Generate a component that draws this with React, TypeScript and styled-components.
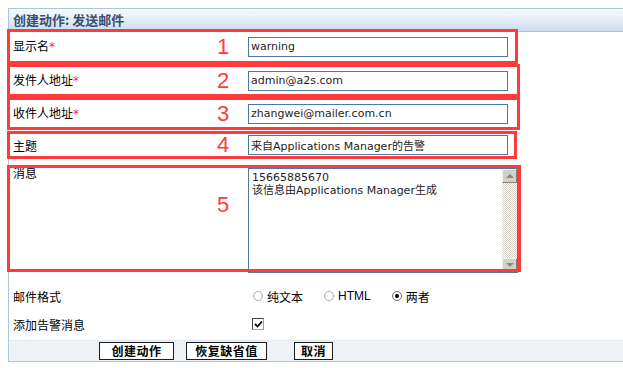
import React from 'react'
import styled, { createGlobalStyle } from 'styled-components'

const GlobalStyle = createGlobalStyle`
	html, body {
		margin: 0;
		padding: 0;
		background: #fff;
	}
	body {
		padding: 8px 0 0 8px;
		overflow: hidden;
		font-family: "Noto Sans CJK SC", sans-serif;
		font-size: 12px;
		color: #000;
	}
`

const LATIN = '"DejaVu Sans", "Noto Sans CJK SC", sans-serif'

interface Field {
	num: string
	label: string
	required?: boolean
	value: string
	h: number
	w: number
	mt: number
}

const fields: Field[] = [
	{ num: '1', label: '显示名', required: true, value: 'warning', h: 35, w: 511, mt: -3 },
	{ num: '2', label: '发件人地址', required: true, value: 'admin@a2s.com', h: 33, w: 513, mt: 0 },
	{ num: '3', label: '收件人地址', required: true, value: 'zhangwei@mailer.com.cn', h: 33, w: 513, mt: 0 },
	{ num: '4', label: '主题', value: '来自Applications Manager的告警', h: 28, w: 510, mt: 1 },
]

export default function App() {
	return (
		<>
			<GlobalStyle />
			<Panel>
				<Header>创建动作: 发送邮件</Header>

				{fields.map((f) => (
					<FormRow key={f.num} $h={f.h} $w={f.w} $mt={f.mt}>
						<Label>
							{f.label}
							{f.required && <Star>*</Star>}
						</Label>
						<Num>{f.num}</Num>
						<TextInput type="text" defaultValue={f.value} />
					</FormRow>
				))}

				<FormRow $h={107} $w={514} $mt={6} $top>
					<Label>消息</Label>
					<Num $mt={29}>5</Num>
					<AreaBox>
						<TextArea
							defaultValue={'15665885670\n该信息由Applications Manager生成'}
						/>
						<ScrollBar>
							<ScrollBtn>
								<Arrow $up />
							</ScrollBtn>
							<Track />
							<ScrollBtn>
								<Arrow />
							</ScrollBtn>
						</ScrollBar>
					</AreaBox>
				</FormRow>

				<OptionRow $mt={10}>
					<OptLabel>邮件格式</OptLabel>
					<RadioGroup>
						<RadioItem>
							<Radio />
							<span>纯文本</span>
						</RadioItem>
						<RadioItem>
							<Radio />
							<Latin>HTML</Latin>
						</RadioItem>
						<RadioItem>
							<Radio $checked />
							<span>两者</span>
						</RadioItem>
					</RadioGroup>
				</OptionRow>

				<OptionRow>
					<OptLabel>添加告警消息</OptLabel>
					<CheckBox>
						<svg width="9" height="9" viewBox="0 0 9 9">
							<path d="M1 4 L3.5 6.5 L8 1.5" stroke="#000" strokeWidth="1.8" fill="none" />
						</svg>
					</CheckBox>
				</OptionRow>

				<ButtonBar>
					<Button $w={75}>创建动作</Button>
					<Button $w={81} $ml={12}>
						恢复缺省值
					</Button>
					<Button $w={39} $ml={27}>
						取消
					</Button>
				</ButtonBar>
			</Panel>
		</>
	)
}

const Panel = styled.div`
	border-left: 1px solid #a9c8de;
	display: flex;
	flex-direction: column;
`

const Header = styled.div`
	height: 22px;
	line-height: 22px;
	border-top: 1px solid #a9c8de;
	border-bottom: 1px solid #a9c8de;
	background: linear-gradient(#f5f8fc, #edf3f9 30%, #c9dcee);
	padding-left: 4px;
	font-size: 13px;
	font-weight: bold;
	color: #3c4f6e;
`

// each form row carries its red annotation frame as an overlay
const FormRow = styled.div<{ $h: number; $w: number; $mt: number; $top?: boolean }>`
	position: relative;
	display: flex;
	align-items: ${(p) => (p.$top ? 'flex-start' : 'center')};
	height: ${(p) => p.$h}px;
	width: ${(p) => p.$w}px;
	margin: ${(p) => p.$mt}px 0 0 -2px;
	box-sizing: border-box;
	&::after {
		content: '';
		position: absolute;
		inset: 0;
		border: 3px solid #ff3a3a;
		pointer-events: none;
		z-index: 2;
	}
`

const Label = styled.div`
	width: 210px;
	padding-left: 6px;
	box-sizing: border-box;
	font-size: 12px;
	line-height: 15px;
	color: #000;
`

const Star = styled.span`
	color: #e8383a;
	font-family: ${LATIN};
`

const Num = styled.div<{ $mt?: number }>`
	width: 31px;
	margin-top: ${(p) => p.$mt || 0}px;
	font-family: 'Liberation Sans', sans-serif;
	font-size: 22px;
	line-height: 22px;
	color: #ff3b3b;
`

const TextInput = styled.input`
	width: 260px;
	height: 20px;
	box-sizing: border-box;
	border: 1px solid #4a79a4;
	padding: 0 2px;
	margin: 0;
	outline: none;
	font-family: ${LATIN};
	font-size: 11px;
	color: #1e1e1e;
	background: #fff;
`

const AreaBox = styled.div`
	display: flex;
	width: 270px;
	height: 105px;
	margin-top: 3px;
	box-sizing: border-box;
	border: 1px solid #4a79a4;
	background: #fff;
`

const TextArea = styled.textarea`
	flex: 1;
	border: none;
	outline: none;
	resize: none;
	overflow: hidden;
	margin: 0;
	padding: 2px 3px;
	font-family: ${LATIN};
	font-size: 11px;
	line-height: 13px;
	color: #1e1e1e;
`

const ScrollBar = styled.div`
	width: 15px;
	display: flex;
	flex-direction: column;
`

const ScrollBtn = styled.div`
	height: 14px;
	box-sizing: border-box;
	background: #d4d0c8;
	border: 1px solid;
	border-color: #f4f3ef #808080 #808080 #f4f3ef;
	display: flex;
	align-items: center;
	justify-content: center;
`

const Arrow = styled.div<{ $up?: boolean }>`
	width: 0;
	height: 0;
	border-left: 4px solid transparent;
	border-right: 4px solid transparent;
	${(p) => (p.$up ? 'border-bottom: 4px solid #8a8a8a;' : 'border-top: 4px solid #8a8a8a;')}
`

const Track = styled.div`
	flex: 1;
	background-color: #fff;
	background-image: repeating-conic-gradient(#d4d0c8 0 25%, #fff 0 50%);
	background-size: 2px 2px;
`

const OptionRow = styled.div<{ $mt?: number }>`
	display: flex;
	align-items: center;
	height: 28px;
	margin-top: ${(p) => p.$mt || 0}px;
`

const OptLabel = styled.div`
	width: 244px;
	padding-left: 4px;
	box-sizing: border-box;
	font-size: 12px;
`

const RadioGroup = styled.div`
	display: flex;
	align-items: center;
	gap: 21px;
`

const RadioItem = styled.label`
	display: flex;
	align-items: center;
	gap: 4px;
	font-size: 12px;
`

const Latin = styled.span`
	font-family: 'Liberation Sans', sans-serif;
	color: #000033;
`

const Radio = styled.span<{ $checked?: boolean }>`
	position: relative;
	width: 10px;
	height: 10px;
	box-sizing: border-box;
	border-radius: 50%;
	border: 1px solid ${(p) => (p.$checked ? '#707070' : '#a8a8a8')};
	background: #fff;
	&::after {
		content: '';
		display: ${(p) => (p.$checked ? 'block' : 'none')};
		position: absolute;
		left: 2px;
		top: 2px;
		width: 4px;
		height: 4px;
		border-radius: 50%;
		background: #000;
	}
`

const CheckBox = styled.span`
	width: 12px;
	height: 12px;
	box-sizing: border-box;
	margin-left: -1px;
	border: 1px solid;
	border-color: #404040 #a0a0a0 #a0a0a0 #404040;
	background: #fff;
	display: flex;
	align-items: center;
	justify-content: center;
`

const ButtonBar = styled.div`
	display: flex;
	align-items: center;
	height: 20px;
	margin-top: 2px;
	padding-left: 90px;
	border-top: 1px solid #e1e7ef;
	border-bottom: 1px solid #a9c8de;
	background: #eef2f7;
`

const Button = styled.button<{ $w: number; $ml?: number }>`
	width: ${(p) => p.$w}px;
	height: 18px;
	margin: 0 0 0 ${(p) => p.$ml || 0}px;
	padding: 0;
	box-sizing: border-box;
	border: 1px solid #1c1c1c;
	background: #fff;
	font-family: "Noto Sans CJK SC", sans-serif;
	font-size: 12px;
	font-weight: bold;
	letter-spacing: 0.5px;
	line-height: 16px;
	color: #000;
	cursor: pointer;
`
